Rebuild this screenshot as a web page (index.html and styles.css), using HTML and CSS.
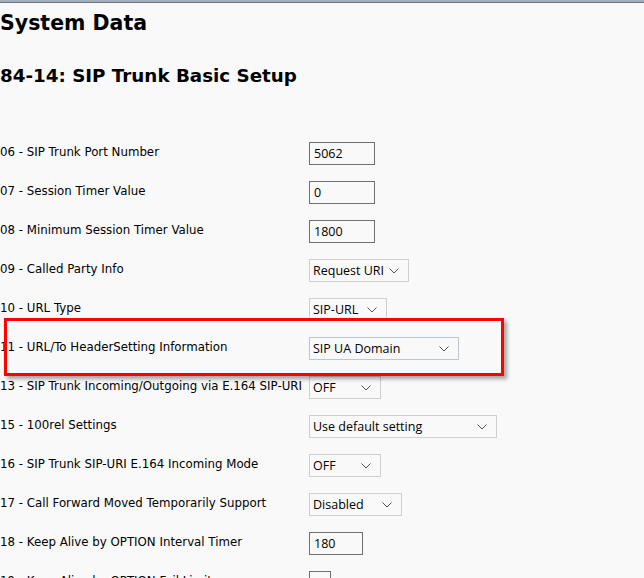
FILE: index.html
```html
<!DOCTYPE html>
<html lang="en">
<head>
  <meta charset="UTF-8">
  <title>System Data</title>
  <link rel="stylesheet" href="styles.css">
</head>
<body>

<div class="topbar"></div>

<h1>System Data</h1>
<h2>84-14: SIP Trunk Basic Setup</h2>

<div id="settings">
  <div class="row">
    <div class="label">06 - SIP Trunk Port Number</div>
    <div class="field"><span class="input w66">5062</span></div>
  </div>
  <div class="row">
    <div class="label">07 - Session Timer Value</div>
    <div class="field"><span class="input w66">0</span></div>
  </div>
  <div class="row">
    <div class="label">08 - Minimum Session Timer Value</div>
    <div class="field"><span class="input w66">1800</span></div>
  </div>
  <div class="row">
    <div class="label">09 - Called Party Info</div>
    <div class="field"><span class="select w100">Request URI<svg class="chev" viewBox="0 0 10 6"><path d="M0.5 0.5 L5 5 L9.5 0.5"/></svg></span></div>
  </div>
  <div class="row">
    <div class="label">10 - URL Type</div>
    <div class="field"><span class="select w78">SIP-URL<svg class="chev" viewBox="0 0 10 6"><path d="M0.5 0.5 L5 5 L9.5 0.5"/></svg></span></div>
  </div>
  <div class="row">
    <div class="label">11 - URL/To HeaderSetting Information</div>
    <div class="field"><span class="select w150 focus">SIP UA Domain<svg class="chev" viewBox="0 0 10 6"><path d="M0.5 0.5 L5 5 L9.5 0.5"/></svg></span></div>
  </div>
  <div class="row">
    <div class="label">13 - SIP Trunk Incoming/Outgoing via E.164 SIP-URI</div>
    <div class="field"><span class="select w72">OFF<svg class="chev" viewBox="0 0 10 6"><path d="M0.5 0.5 L5 5 L9.5 0.5"/></svg></span></div>
  </div>
  <div class="row">
    <div class="label">15 - 100rel Settings</div>
    <div class="field"><span class="select w188">Use default setting<svg class="chev" viewBox="0 0 10 6"><path d="M0.5 0.5 L5 5 L9.5 0.5"/></svg></span></div>
  </div>
  <div class="row">
    <div class="label">16 - SIP Trunk SIP-URI E.164 Incoming Mode</div>
    <div class="field"><span class="select w72">OFF<svg class="chev" viewBox="0 0 10 6"><path d="M0.5 0.5 L5 5 L9.5 0.5"/></svg></span></div>
  </div>
  <div class="row">
    <div class="label">17 - Call Forward Moved Temporarily Support</div>
    <div class="field"><span class="select w93">Disabled<svg class="chev" viewBox="0 0 10 6"><path d="M0.5 0.5 L5 5 L9.5 0.5"/></svg></span></div>
  </div>
  <div class="row">
    <div class="label">18 - Keep Alive by OPTION Interval Timer</div>
    <div class="field"><span class="input w54">180</span></div>
  </div>
  <div class="row">
    <div class="label">19 - Keep Alive by OPTION Fail Limit</div>
    <div class="field"><span class="input w22">&nbsp;</span></div>
  </div>

  <!-- annotation around item 11 -->
  <div class="highlight"></div>
</div>

</body>
</html>
```

FILE: styles.css
```css
body {
  margin: 0;
  background-color: #f9f9f9;
  color: #000;
  font-family: "DejaVu Sans", Verdana, sans-serif;
}

.topbar {
  height: 2px;
  background-color: #a3adbb;
  border-bottom: 1px solid #6f7783;
}

h1 {
  font-size: 20.5px;
  font-weight: bold;
  margin: 6px 0 0 0;
  line-height: 28px;
}

h2 {
  font-size: 18.3px;
  font-weight: bold;
  margin: 26px 0 0 0;
  line-height: 26px;
}

#settings {
  position: relative;
  margin-top: 45px;
  font-family: "DejaVu Sans", Tahoma, sans-serif;
  font-size: 11.8px;
}

.row {
  display: flex;
  align-items: center;
  height: 39px;
}

.label {
  width: 309px;
  flex: none;
  margin-top: -3px;
  white-space: nowrap;
}

.field {
  display: flex;
}

.input,
.select {
  box-sizing: border-box;
  height: 23px;
  display: flex;
  align-items: center;
  font-family: "Open Sans", "DejaVu Sans Condensed", sans-serif;
  font-size: 12.5px;
}

.input {
  border: 1px solid #707070;
  padding-left: 4px;
}

.select {
  border: 1px solid #cfcfcf;
  padding-left: 3px;
  padding-right: 9px;
  justify-content: space-between;
}

.select.focus {
  border-color: #bcc5d0;
}

.chev {
  width: 10px;
  height: 6px;
  fill: none;
  stroke: #555;
  stroke-width: 1;
}

.w22 { width: 22px; }
.w54 { width: 54px; }
.w66 { width: 66px; }
.w72 { width: 72px; }
.w78 { width: 78px; }
.w93 { width: 93px; }
.w100 { width: 100px; }
.w150 { width: 150px; }
.w188 { width: 188px; }

.highlight {
  position: absolute;
  left: 4px;
  top: 184px;
  width: 500px;
  height: 58px;
  box-sizing: border-box;
  border: 3px solid #ff0000;
  box-shadow: 3px 3px 4px rgba(0, 0, 0, 0.35);
}
```
